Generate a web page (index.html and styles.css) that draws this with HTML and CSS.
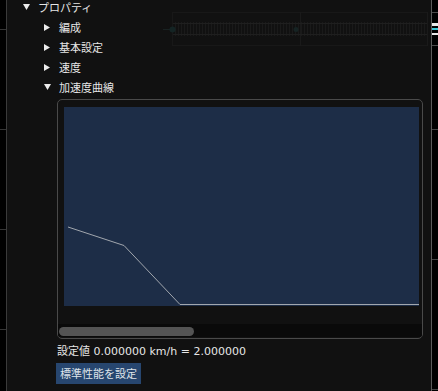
FILE: index.html
```html
<!DOCTYPE html>
<html lang="ja">
<head>
  <meta charset="UTF-8" />
  <meta name="viewport" content="width=device-width, initial-scale=1.0" />
  <title>プロパティ</title>
  <link rel="stylesheet" href="styles.css">
</head>
<body>
  <div class="frame">
    <!-- 左ルーラー -->
    <div class="gutter gutter-left"></div>

    <div class="main">
      <!-- 背景の線路 -->
      <svg class="track" width="424" height="60" viewBox="0 0 424 60">
        <defs>
          <pattern id="ties" width="3" height="14" patternUnits="userSpaceOnUse">
            <rect x="0" y="0" width="1" height="14" fill="#1a1a1a" />
          </pattern>
        </defs>
        <line x1="156" y1="29.5" x2="165" y2="29.5" stroke="#192222" />
        <rect x="165.5" y="12.5" width="255" height="33" fill="none" stroke="#181818" />
        <line x1="293.5" y1="12" x2="293.5" y2="46" stroke="#1a1a1a" />
        <line x1="420.5" y1="12" x2="420.5" y2="46" stroke="#1a1a1a" />
        <rect x="166" y="22" width="254" height="14" fill="url(#ties)" />
        <line x1="166" y1="23.5" x2="420" y2="23.5" stroke="#1f1f1f" />
        <line x1="166" y1="34.5" x2="420" y2="34.5" stroke="#1f1f1f" />
        <circle cx="165.5" cy="29.5" r="3" fill="#142424" />
        <circle cx="289" cy="29.5" r="2.5" fill="#162323" />
      </svg>

      <div class="tree">
        <div class="row">
          <span class="toggle"><svg width="7" height="6" viewBox="0 0 7 6"><path d="M0 0H7L3.5 6Z" fill="#ececec"/></svg></span>
          <span class="label">プロパティ</span>
        </div>

        <div class="children">
          <div class="row">
            <span class="toggle"><svg width="6" height="7" viewBox="0 0 6 7"><path d="M0 0L6 3.5L0 7Z" fill="#ececec"/></svg></span>
            <span class="label">編成</span>
          </div>
          <div class="row">
            <span class="toggle"><svg width="6" height="7" viewBox="0 0 6 7"><path d="M0 0L6 3.5L0 7Z" fill="#ececec"/></svg></span>
            <span class="label">基本設定</span>
          </div>
          <div class="row">
            <span class="toggle"><svg width="6" height="7" viewBox="0 0 6 7"><path d="M0 0L6 3.5L0 7Z" fill="#ececec"/></svg></span>
            <span class="label">速度</span>
          </div>
          <div class="row">
            <span class="toggle"><svg width="7" height="6" viewBox="0 0 7 6"><path d="M0 0H7L3.5 6Z" fill="#ececec"/></svg></span>
            <span class="label">加速度曲線</span>
          </div>
        </div>

        <!-- 加速度曲線 -->
        <div class="curve-section">
          <div class="curve-box">
            <div class="plot">
              <svg width="355" height="199" viewBox="0 0 355 199">
                <polyline points="4,120 60,138.5 116,197.5 355,197.5" fill="none" stroke="#a2a7ae" stroke-width="1" />
              </svg>
            </div>
            <div class="scrollbar">
              <div class="thumb"></div>
            </div>
          </div>
          <div class="value">設定値 0.000000 km/h = 2.000000</div>
          <button class="btn">標準性能を設定</button>
        </div>
      </div>
    </div>

    <!-- 右ルーラー -->
    <div class="gutter gutter-right">
      <svg class="marks" width="6" height="50" viewBox="0 0 6 50">
        <rect x="0" y="12" width="6" height="1" fill="#4a4a4a" />
        <rect x="0" y="23" width="6" height="3" fill="#e8e8e8" />
        <rect x="0" y="28" width="6" height="2" fill="#3cc8d8" />
        <rect x="0" y="33" width="6" height="2" fill="#e8e8e8" />
        <rect x="0" y="45" width="6" height="1" fill="#4a4a4a" />
      </svg>
    </div>
  </div>
</body>
</html>
```

FILE: styles.css
```css
/* 全体 */
html, body {
  margin: 0;
  padding: 0;
  background: #111111;
}

body {
  font-family: "Noto Sans CJK JP", "Noto Sans", sans-serif;
  font-size: 11px;
  color: #e6e6e6;
}

.frame {
  display: flex;
  width: 438px;
  height: 391px;
  overflow: hidden;
}

/* ルーラー */
.gutter {
  width: 6px;
  flex: none;
  background-color: #000;
}

.gutter-left {
  border-right: 1px solid #3a3a3a;
  background-image: repeating-linear-gradient(180deg, transparent 0 29px, #363636 29px 30px, transparent 30px 100px);
}

.gutter-right {
  position: relative;
  border-left: 1px solid #5a5a5a;
  background-image: repeating-linear-gradient(180deg, transparent 0 129px, #444 129px 130px, transparent 130px 100px);
  background-position: 0 0;
}

.gutter-right .marks {
  position: absolute;
  left: 0;
  top: 0;
}

.main {
  flex: 1;
  position: relative;
}

.track {
  position: absolute;
  left: 0;
  top: 0;
}

/* ツリー */
.tree {
  position: relative;
  margin-top: -3px;
}

.row {
  display: flex;
  align-items: center;
  height: 20px;
  padding-left: 16px;
}

.children .row {
  padding-left: 37px;
}

.toggle {
  display: inline-flex;
  align-items: center;
  width: 15px;
  flex: none;
}

.toggle svg {
  display: block;
}

.label {
  line-height: 20px;
  white-space: nowrap;
}

/* 曲線エリア */
.curve-section {
  margin-left: 50px;
  margin-top: 2px;
}

.curve-box {
  width: 364px;
  height: 238px;
  border: 1px solid #4a4a4a;
  border-radius: 5px;
  background: #111111;
  display: flex;
  flex-direction: column;
  overflow: hidden;
}

.plot {
  width: 355px;
  height: 199px;
  margin: 7px 0 0 6px;
  background: #1d2d47;
}

.plot svg {
  display: block;
}

.scrollbar {
  margin-top: 18px;
  height: 13px;
  background: #0a0a0a;
  padding: 3px 0 0 1px;
  box-sizing: border-box;
}

.thumb {
  width: 135px;
  height: 9px;
  border-radius: 5px;
  background: #545454;
}

.value {
  margin-top: 5px;
  height: 15px;
  line-height: 15px;
  white-space: nowrap;
  font-family: "DejaVu Sans", "Noto Sans CJK JP", sans-serif;
}

.btn {
  display: block;
  margin-top: 4px;
  margin-left: -1px;
  height: 21px;
  padding: 0 4px;
  border: none;
  border-radius: 0;
  background: #27466f;
  color: #dfe4ea;
  font-family: inherit;
  font-size: 11px;
  line-height: 21px;
}
```
